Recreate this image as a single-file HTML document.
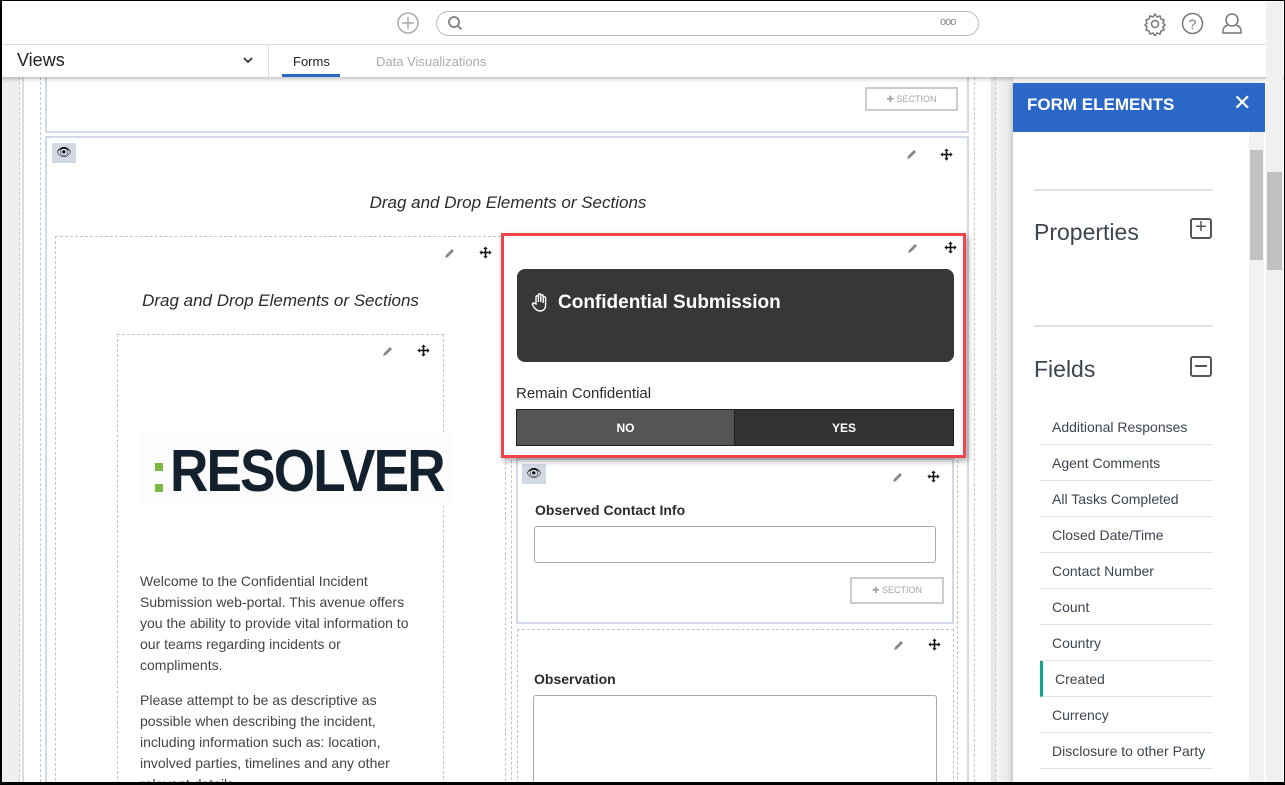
<!DOCTYPE html>
<html><head><meta charset="utf-8"><style>
*{box-sizing:border-box;margin:0;padding:0}
body{width:1285px;height:785px;overflow:hidden;background:#000;font-family:"Liberation Sans",sans-serif;position:relative}
.a{position:absolute}
.dash{border:1px dashed #c4c4c4}
.sec{border:2px solid #d3d9e6}
.pen{position:absolute;width:12px;height:12px}
.mv{position:absolute;width:13px;height:13px}
.t{color:#2b2b2b}
.li{position:absolute;left:1040px;width:173px;height:36px;border-bottom:1px solid #e2e2e2;font-size:14px;color:#3d4550;padding:10px 0 0 12px}
.btn{position:absolute;border:2px solid #c9cdd2;font-size:9px;color:#a0a4aa;text-align:center;background:#fff}
</style></head><body>
<svg width="0" height="0" style="position:absolute"><defs>
<symbol id="mv" viewBox="0 0 13 13"><path d="M6.5 0.5l2.2 2.5H7.3v2.8h2.8V4.3l2.5 2.2-2.5 2.2V7.3H7.3v2.8h1.4l-2.2 2.5-2.2-2.5h1.4V7.3H2.9v1.4L0.4 6.5l2.5-2.2v1.5h2.8V3H4.3z" fill="#111"/></symbol>
<symbol id="pn" viewBox="0 0 12 12"><path d="M2 10l1-3 6-6 2 2-6 6z" fill="#888"/></symbol>
</defs></svg>
<div class="a" style="left:2px;top:1px;width:1282px;height:781px;background:#fff;overflow:hidden">
<div class="a" style="left:-2px;top:-1px;width:1285px;height:785px">
<div class="a" style="left:2px;top:77px;width:18px;height:710px;background:#efefef"></div>
<div class="a" style="left:19px;top:77px;height:710px;border-left:1px dashed #c8c8c8"></div>
<div class="a" style="left:22px;top:77px;width:2px;height:710px;background:#dcdcdc"></div>
<div class="a" style="left:40px;top:77px;height:710px;border-left:1px dashed #c8c8c8"></div>
<div class="a" style="left:974px;top:77px;height:710px;border-left:1px dashed #c8c8c8"></div>
<div class="a" style="left:991px;top:77px;width:22px;height:710px;background:linear-gradient(90deg,#e4e4e4,#f2f2f2 30%,#e8e8e8)"></div>
<div class="a" style="left:995px;top:77px;height:710px;border-left:1px dashed #c8c8c8"></div>

<div class="a sec" style="left:45px;top:70px;width:924px;height:63px"></div>
<div class="btn" style="left:865px;top:87px;width:93px;height:24px;padding-top:5px">✚ SECTION</div>
<div class="a sec" style="left:45px;top:136px;width:924px;height:660px"></div>
<div class="a" style="left:52px;top:143px;width:24px;height:20px;background:#d3d9e4;font-size:12px;text-align:center;padding-top:2px">👁</div>
<svg class="pen" style="left:905px;top:149px"><use href="#pn"/></svg>
<svg class="mv" style="left:940px;top:148px"><use href="#mv"/></svg>
<div class="a t" style="left:0;width:1016px;top:193px;text-align:center;font-style:italic;font-size:17px">Drag and Drop Elements or Sections</div>

<div class="a dash" style="left:55px;top:236px;width:451px;height:560px"></div>
<svg class="pen" style="left:443px;top:248px"><use href="#pn"/></svg>
<svg class="mv" style="left:479px;top:246px"><use href="#mv"/></svg>
<div class="a t" style="left:55px;width:451px;top:291px;text-align:center;font-style:italic;font-size:17px">Drag and Drop Elements or Sections</div>
<div class="a dash" style="left:117px;top:334px;width:327px;height:460px"></div>
<svg class="pen" style="left:381px;top:346px"><use href="#pn"/></svg>
<svg class="mv" style="left:417px;top:344px"><use href="#mv"/></svg>
<div class="a" style="left:138px;top:432px;width:315px;height:74px;background:#fcfcfc"></div>
<div class="a" style="left:155px;top:463px;width:8px;height:8px;background:#79b843"></div>
<div class="a" style="left:155px;top:484px;width:8px;height:8px;background:#79b843"></div>
<div class="a" style="left:170px;top:438px;font-size:59px;font-weight:bold;color:#13202e;letter-spacing:-2px;line-height:66px;transform:scaleX(0.9);transform-origin:left">RESOLVER</div>
<div class="a" style="left:140px;top:571px;width:282px;font-size:14px;line-height:21px;color:#444">Welcome to the Confidential Incident Submission web-portal. This avenue offers you the ability to provide vital information to our teams regarding incidents or compliments.<div style="height:14px"></div>Please attempt to be as descriptive as possible when describing the incident, including information such as: location, involved parties, timelines and any other relevant details.</div>

<div class="a dash" style="left:511px;top:440px;width:447px;height:360px"></div>
<div class="a sec" style="left:516px;top:458px;width:438px;height:166px"></div>
<div class="a" style="left:522px;top:464px;width:24px;height:20px;background:#d3d9e4;font-size:12px;text-align:center;padding-top:2px">👁</div>
<svg class="pen" style="left:891px;top:472px"><use href="#pn"/></svg>
<svg class="mv" style="left:927px;top:470px"><use href="#mv"/></svg>
<div class="a t" style="left:535px;top:502px;font-size:14px;font-weight:bold">Observed Contact Info</div>
<div class="a" style="left:534px;top:526px;width:402px;height:37px;border:1px solid #aaa;border-radius:3px"></div>
<div class="btn" style="left:850px;top:577px;width:94px;height:27px;padding-top:6px">✚ SECTION</div>
<div class="a dash" style="left:517px;top:629px;width:437px;height:170px"></div>
<svg class="pen" style="left:892px;top:640px"><use href="#pn"/></svg>
<svg class="mv" style="left:928px;top:638px"><use href="#mv"/></svg>
<div class="a t" style="left:534px;top:671px;font-size:14px;font-weight:bold">Observation</div>
<div class="a" style="left:533px;top:695px;width:404px;height:100px;border:1px solid #aaa;border-radius:3px"></div>

<div class="a" style="left:501px;top:233px;width:465px;height:225px;background:#fff;border:3px solid #f0434a;box-shadow:2px 3px 6px rgba(0,0,0,.35)"></div>
<svg class="pen" style="left:906px;top:243px"><use href="#pn"/></svg>
<svg class="mv" style="left:944px;top:241px"><use href="#mv"/></svg>
<div class="a" style="left:517px;top:269px;width:437px;height:93px;background:#373737;border-radius:8px"></div>
<svg class="a" style="left:531px;top:292px" width="18" height="20" viewBox="0 0 18 20"><path d="M5 12V5a1.2 1.2 0 0 1 2.4 0v5V3a1.2 1.2 0 0 1 2.4 0v7V4a1.2 1.2 0 0 1 2.4 0v7V6a1.2 1.2 0 0 1 2.4 0v7c0 4-2.5 6-5.5 6S4 17 2.5 14.5L1.5 12.5a1.2 1.2 0 0 1 2-1.2z" fill="none" stroke="#fff" stroke-width="1.4"/></svg>
<div class="a" style="left:558px;top:292px;font-size:19px;font-weight:bold;color:#fff">Confidential Submission</div>
<div class="a t" style="left:516px;top:385px;font-size:15px">Remain Confidential</div>
<div class="a" style="left:516px;top:409px;width:219px;height:37px;background:#555;border:1px solid #222;color:#fff;font-size:12px;font-weight:bold;text-align:center;padding-top:11px">NO</div>
<div class="a" style="left:734px;top:409px;width:220px;height:37px;background:#333;border:1px solid #222;color:#fff;font-size:12px;font-weight:bold;text-align:center;padding-top:11px">YES</div>

<div class="a" style="left:0;top:0;width:1285px;height:77px;background:#fff;box-shadow:0 2px 4px rgba(0,0,0,.25)"></div>
<div class="a" style="left:0;top:44px;width:1285px;height:1px;background:#ddd"></div>
<svg class="a" style="left:397px;top:12px" width="22" height="22"><circle cx="11" cy="11" r="10" fill="none" stroke="#aaa" stroke-width="1.5"/><path d="M11 5v12M5 11h12" stroke="#aaa" stroke-width="1.5"/></svg>
<div class="a" style="left:436px;top:11px;width:543px;height:25px;border:1px solid #bbb;border-radius:13px"></div>
<svg class="a" style="left:447px;top:15px" width="16" height="16"><circle cx="7" cy="7" r="5" fill="none" stroke="#888" stroke-width="2"/><path d="M10.5 10.5l4 4" stroke="#888" stroke-width="2"/></svg>
<div class="a" style="left:940px;top:16px;font-size:11px;color:#888;letter-spacing:-1px">ooo</div>
<svg class="a" style="left:1143px;top:12px" width="24" height="24" viewBox="0 0 24 24"><path d="M12 2l2 3 3-1 1 3 3 1-1 3 2 2-2 2 1 3-3 1-1 3-3-1-2 3-2-3-3 1-1-3-3-1 1-3-2-2 2-2-1-3 3-1 1-3 3 1z" fill="none" stroke="#777" stroke-width="1.5"/><circle cx="12" cy="12" r="3.5" fill="none" stroke="#777" stroke-width="1.5"/></svg>
<svg class="a" style="left:1181px;top:12px" width="23" height="23"><circle cx="11.5" cy="11.5" r="10" fill="none" stroke="#777" stroke-width="1.5"/><text x="11.5" y="17" font-size="14" text-anchor="middle" fill="#777" font-family="Liberation Sans">?</text></svg>
<svg class="a" style="left:1220px;top:11px" width="24" height="24"><circle cx="12" cy="9" r="6" fill="none" stroke="#777" stroke-width="1.5"/><path d="M8 14c-3 1-5 3-5 6v2h18v-2c0-3-2-5-5-6" fill="none" stroke="#777" stroke-width="1.5"/></svg>
<div class="a" style="left:17px;top:50px;font-size:18px;color:#222">Views</div>
<svg class="a" style="left:243px;top:57px" width="10" height="8"><path d="M1 1l4 4 4-4" fill="none" stroke="#333" stroke-width="1.8"/></svg>
<div class="a" style="left:268px;top:45px;width:1px;height:32px;background:#ddd"></div>
<div class="a" style="left:293px;top:54px;font-size:13px;color:#222">Forms</div>
<div class="a" style="left:282px;top:74px;width:58px;height:3px;background:#2a67c6"></div>
<div class="a" style="left:376px;top:54px;font-size:13px;color:#aaa">Data Visualizations</div>

<div class="a" style="left:1013px;top:83px;width:252px;height:710px;background:#fff;box-shadow:-2px 0 4px rgba(0,0,0,.15)"></div>
<div class="a" style="left:1013px;top:83px;width:252px;height:49px;background:#2a67c6"></div>
<div class="a" style="left:1027px;top:95px;font-size:17px;font-weight:bold;color:#fff">FORM ELEMENTS</div>
<div class="a" style="left:1233px;top:90px;font-size:22px;color:#fff">✕</div>
<div class="a" style="left:1249px;top:132px;width:15px;height:660px;background:#f2f2f2"></div>
<div class="a" style="left:1250px;top:150px;width:13px;height:110px;background:#c1c1c1"></div>
<div class="a" style="left:1266px;top:2px;width:17px;height:780px;background:#f0f0f0"></div>
<div class="a" style="left:1267px;top:172px;width:15px;height:98px;background:#c1c1c1"></div>
<div class="a" style="left:1034px;top:189px;width:179px;height:2px;background:#e2e2e2"></div>
<div class="a" style="left:1034px;top:219px;font-size:23px;color:#3d4550">Properties</div>
<div class="a" style="left:1190px;top:218px;width:22px;height:21px;border:2px solid #555;border-radius:3px;font-size:20px;line-height:15px;text-align:center;color:#555">+</div>
<div class="a" style="left:1034px;top:325px;width:179px;height:2px;background:#e2e2e2"></div>
<div class="a" style="left:1034px;top:356px;font-size:23px;color:#3d4550">Fields</div>
<div class="a" style="left:1190px;top:356px;width:22px;height:21px;border:2px solid #555;border-radius:3px"><div style="margin:7px 3px;height:2px;background:#555"></div></div>
<div class="li" style="top:409px">Additional Responses</div>
<div class="li" style="top:445px">Agent Comments</div>
<div class="li" style="top:481px">All Tasks Completed</div>
<div class="li" style="top:517px">Closed Date/Time</div>
<div class="li" style="top:553px">Contact Number</div>
<div class="li" style="top:589px">Count</div>
<div class="li" style="top:625px">Country</div>
<div class="li" style="top:661px;border-left:3px solid #0ea58d;padding-left:12px">Created</div>
<div class="li" style="top:697px">Currency</div>
<div class="li" style="top:733px">Disclosure to other Party</div>
<div class="li" style="top:769px">Individual Involved</div>
</div></div>
</body></html>
